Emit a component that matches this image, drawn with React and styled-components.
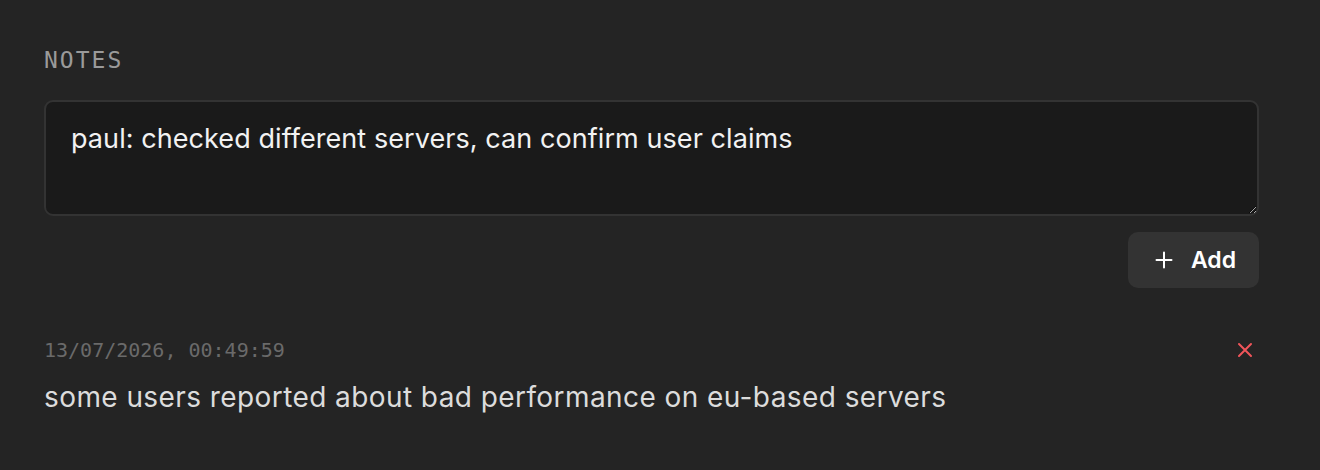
import React, { useState } from "react";
import styled, { createGlobalStyle } from "styled-components";

const Global = createGlobalStyle`
  html, body { margin: 0; padding: 0; background: #242424; }
  body { font-family: Inter, "Noto Sans", sans-serif; }
  * { box-sizing: border-box; }
`;

const Page = styled.div`
  min-height: 470px;
  background: #242424;
  padding: 44px 61px 0 44px;
`;

const Heading = styled.h2`
  margin: 0 0 24px;
  font-family: "DejaVu Sans Mono", monospace;
  font-weight: 400;
  font-size: 23px;
  line-height: 32px;
  letter-spacing: 2px;
  color: #9a9a9a;
`;

const NoteInput = styled.textarea`
  display: block;
  width: 100%;
  height: 116px;
  margin: 0;
  padding: 19px 25px 17px;
  background: #1a1a1a;
  border: 2px solid #333333;
  border-radius: 9px;
  color: #f2f2f2;
  font-family: Inter, sans-serif;
  font-size: 27px;
  line-height: 36px;
  letter-spacing: 0.07px;
  resize: vertical;
  outline: none;
`;

const Actions = styled.div`
  display: flex;
  justify-content: flex-end;
  margin-top: 16px;
`;

const AddButton = styled.button`
  display: flex;
  align-items: center;
  gap: 18px;
  height: 56px;
  padding: 0 23px 0 27px;
  border: none;
  border-radius: 10px;
  background: #333333;
  color: #ffffff;
  font-family: Inter, sans-serif;
  font-weight: 600;
  font-size: 23px;
  cursor: pointer;
`;

const NoteList = styled.ul`
  list-style: none;
  margin: 50px 0 0;
  padding: 0;
`;

const NoteItem = styled.li`
  display: flex;
  flex-direction: column;
  gap: 18px;
`;

const NoteHeader = styled.div`
  display: flex;
  justify-content: space-between;
  align-items: center;
`;

const Stamp = styled.span`
  font-family: "DejaVu Sans Mono", monospace;
  font-size: 20px;
  line-height: 24px;
  color: #6a6a6a;
`;

const DeleteButton = styled.button`
  display: flex;
  align-items: center;
  justify-content: center;
  width: 24px;
  height: 24px;
  padding: 0;
  margin-right: 2px;
  border: none;
  background: transparent;
  cursor: pointer;
`;

const NoteText = styled.p`
  margin: 0;
  font-family: Inter, sans-serif;
  font-size: 28px;
  line-height: 34px;
  letter-spacing: 0.42px;
  color: #dcdcdc;
`;

export default function App() {
  const [value, setValue] = useState(
    "paul: checked different servers, can confirm user claims"
  );
  return (
    <>
      <Global />
      <Page>
        <Heading>NOTES</Heading>
        <NoteInput value={value} onChange={(e) => setValue(e.target.value)} />
        <Actions>
          <AddButton>
            <svg width="18" height="18" viewBox="0 0 18 18" fill="none" stroke="#fff" strokeWidth="2" strokeLinecap="round">
              <path d="M9 1.5v15M1.5 9h15" />
            </svg>
            Add
          </AddButton>
        </Actions>
        <NoteList>
          <NoteItem>
            <NoteHeader>
              <Stamp>13/07/2026, 00:49:59</Stamp>
              <DeleteButton aria-label="Delete note">
                <svg width="16" height="16" viewBox="0 0 16 16" fill="none" stroke="#f0555a" strokeWidth="2" strokeLinecap="round">
                  <path d="M2 2l12 12M14 2L2 14" />
                </svg>
              </DeleteButton>
            </NoteHeader>
            <NoteText>some users reported about bad performance on eu-based servers</NoteText>
          </NoteItem>
        </NoteList>
      </Page>
    </>
  );
}
